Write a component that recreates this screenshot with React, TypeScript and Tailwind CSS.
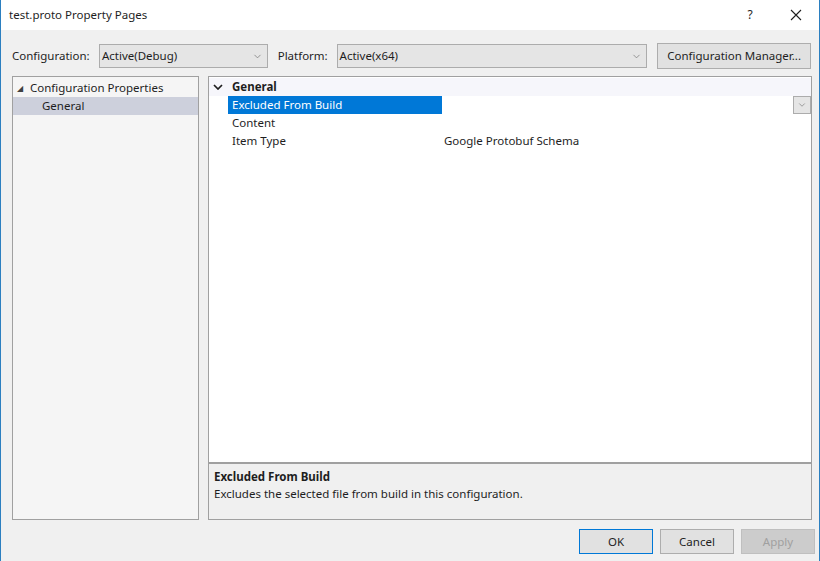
import { ChevronDown } from "lucide-react";

const font = "font-['Segoe_UI','Noto_Sans',sans-serif]";

function Combo({ value, width }: { value: string; width: string }) {
  return (
    <div className={`${width} h-[24px] flex items-center justify-between bg-[#e5e5e5] border border-[#acacac] pl-[2px] pr-[4px]`}>
      <span>{value}</span>
      <ChevronDown size={11} strokeWidth={1.5} className="text-[#707070]" />
    </div>
  );
}

function Button({ label, primary, disabled }: { label: string; primary?: boolean; disabled?: boolean }) {
  return (
    <button
      className={`w-[74px] h-[25px] flex items-center justify-center border ${
        primary ? "border-[#0078d7] bg-[#e1e1e1]" : disabled ? "border-[#bfbfbf] bg-[#cccccc] text-[#a0a0a0]" : "border-[#adadad] bg-[#e1e1e1]"
      }`}
    >
      {label}
    </button>
  );
}

function PropRow({ name, value, selected }: { name: string; value?: string; selected?: boolean }) {
  return (
    <div className="flex h-[18px] items-center">
      <div className="w-[19px] shrink-0" />
      <div className={`w-[214px] shrink-0 h-full flex items-center pl-[4px] ${selected ? "bg-[#0078d7] text-white" : ""}`}>
        {name}
      </div>
      <div className="flex-1 h-full flex items-center pl-[2px] justify-between">
        <span>{value}</span>
        {selected && (
          <div className="w-[18px] h-[18px] bg-[#e5e5e5] border border-[#acacac] flex items-center justify-center">
            <ChevronDown size={10} strokeWidth={1.5} className="text-[#707070]" />
          </div>
        )}
      </div>
    </div>
  );
}

export default function App() {
  return (
    <div className={`${font} text-[11px] text-[#1e1e1e] w-[820px] h-[561px] flex flex-col bg-[#f0f0f0] border-x border-[#2b7fc0] overflow-hidden`}>
      {/* title bar */}
      <div className="h-[30px] bg-white flex items-center pl-[8px] shrink-0 text-[12px]">
        <span className="flex-1 text-[11.5px]">test.proto Property Pages</span>
        <span className="w-[20px] text-center mr-[30px]">?</span>
        <svg width="12" height="12" viewBox="0 0 12 12" className="mr-[17px]">
          <path d="M1 1L11 11M11 1L1 11" stroke="#1e1e1e" strokeWidth="1.1" />
        </svg>
      </div>

      {/* configuration row */}
      <div className="flex items-center mt-[13px] pl-[11px] pr-[8px] h-[26px] text-[11.5px]">
        <span className="w-[87px]">Configuration:</span>
        <Combo value="Active(Debug)" width="w-[169px]" />
        <span className="ml-[10px] w-[59px]">Platform:</span>
        <Combo value="Active(x64)" width="w-[311px]" />
        <button className="ml-[10px] w-[154px] h-[26px] border border-[#adadad] bg-[#e1e1e1] flex items-center justify-center">
          Configuration Manager...
        </button>
      </div>

      {/* main area */}
      <div className="flex mt-[7px] pl-[11px] pr-[7px] h-[444px] gap-[9px] text-[11.5px]">
        <div className="w-[187px] border border-[#a0a0a0] bg-[#f5f5f5] pt-[2px]">
          <div className="h-[18px] flex items-center pl-[4px]">
            <span className="text-[8px] text-[#404040] w-[13px]">◢</span>
            <span>Configuration Properties</span>
          </div>
          <div className="h-[18px] flex items-center pl-[29px] bg-[#cdd0dc]">General</div>
        </div>

        <div className="flex-1 flex flex-col">
          <div className="h-[387px] border border-[#a0a0a0] bg-white pt-[1px]">
            <div className="h-[18px] flex items-center bg-[#f6f6fb]">
              <svg width="10" height="6" viewBox="0 0 10 6" className="ml-[4px] mr-[9px]">
                <path d="M1 1L5 5L9 1" stroke="#1e1e1e" strokeWidth="1.7" fill="none" />
              </svg>
              <span className="font-bold">General</span>
            </div>
            <PropRow name="Excluded From Build" selected />
            <PropRow name="Content" />
            <PropRow name="Item Type" value="Google Protobuf Schema" />
          </div>
          <div className="h-[57px] border border-[#a0a0a0] bg-[#f0f0f0] px-[5px] pt-[5px]">
            <div className="font-bold leading-[16px]">Excluded From Build</div>
            <div className="leading-[18px]">Excludes the selected file from build in this configuration.</div>
          </div>
        </div>
      </div>

      {/* buttons */}
      <div className="flex justify-end gap-[7px] mt-[9px] pr-[4px] text-[11.5px]">
        <Button label="OK" primary />
        <Button label="Cancel" />
        <Button label="Apply" disabled />
      </div>
    </div>
  );
}
